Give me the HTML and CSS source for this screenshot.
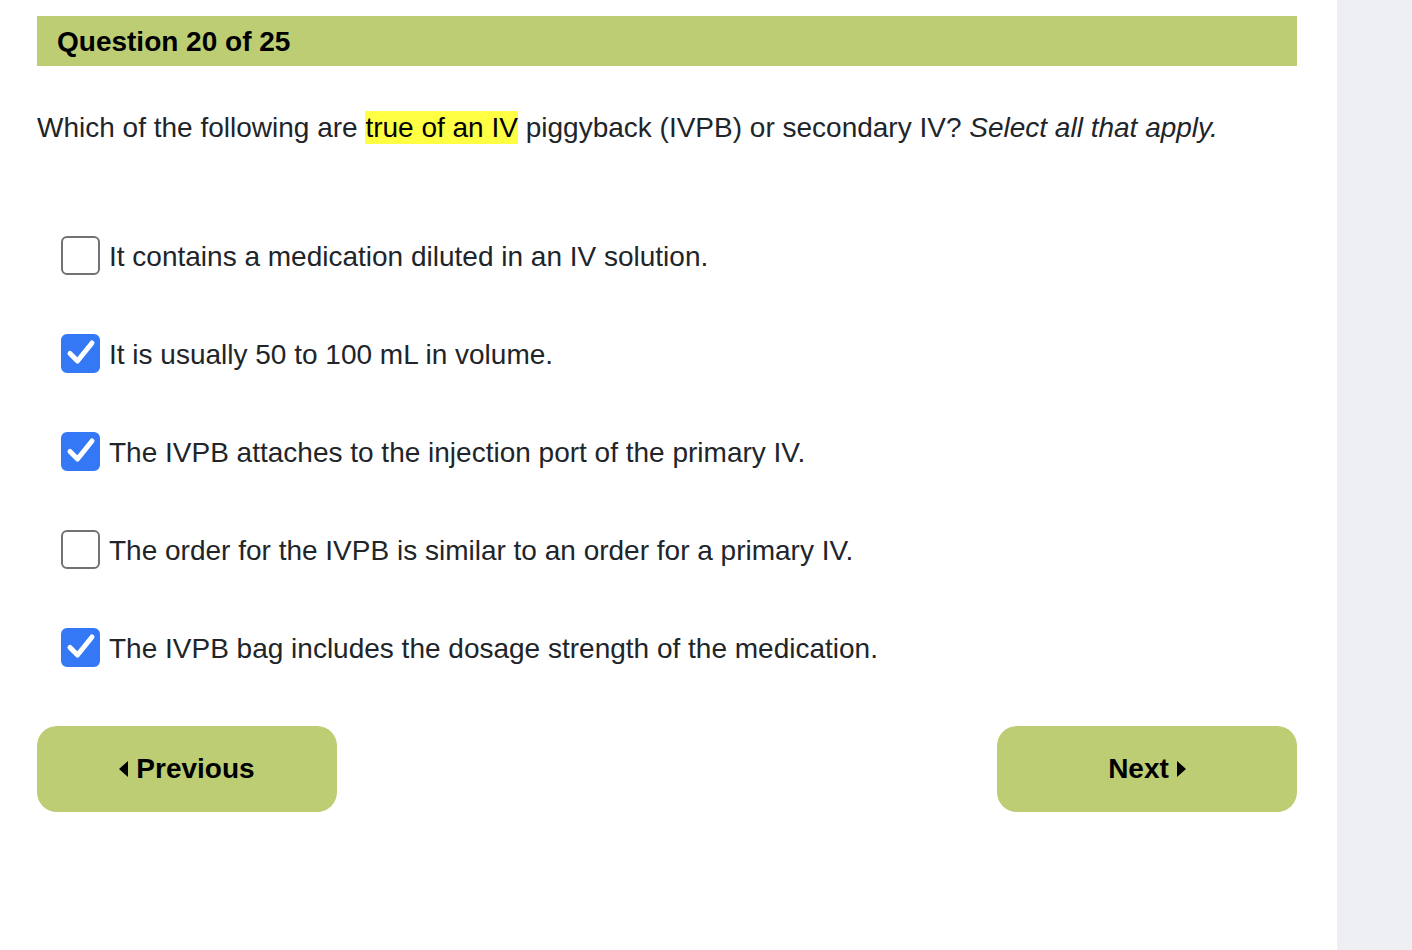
FILE: index.html
```html
<!DOCTYPE html>
<html lang="en">
<head>
    <meta charset="UTF-8">
    <title>Question 20 of 25</title>
    <link rel="stylesheet" href="styles.css">
</head>
<body>
    <div class="page">
        <div class="quiz">
            <div class="quiz-header">Question 20 of 25</div>

            <p class="question">Which of the following are <span class="hl">true of an IV</span> piggyback (IVPB) or secondary IV? <em>Select all that apply.</em></p>

            <div class="options">
                <label class="option">
                    <span class="box"></span>
                    <span class="option-text">It contains a medication diluted in an IV solution.</span>
                </label>
                <label class="option checked">
                    <span class="box"><svg viewBox="0 0 40 40" width="40" height="40"><path d="M9 20.5 L16.5 28 L31 10" fill="none" stroke="#fff" stroke-width="5" stroke-linecap="round" stroke-linejoin="round"/></svg></span>
                    <span class="option-text">It is usually 50 to 100 mL in volume.</span>
                </label>
                <label class="option checked">
                    <span class="box"><svg viewBox="0 0 40 40" width="40" height="40"><path d="M9 20.5 L16.5 28 L31 10" fill="none" stroke="#fff" stroke-width="5" stroke-linecap="round" stroke-linejoin="round"/></svg></span>
                    <span class="option-text">The IVPB attaches to the injection port of the primary IV.</span>
                </label>
                <label class="option">
                    <span class="box"></span>
                    <span class="option-text">The order for the IVPB is similar to an order for a primary IV.</span>
                </label>
                <label class="option checked">
                    <span class="box"><svg viewBox="0 0 40 40" width="40" height="40"><path d="M9 20.5 L16.5 28 L31 10" fill="none" stroke="#fff" stroke-width="5" stroke-linecap="round" stroke-linejoin="round"/></svg></span>
                    <span class="option-text">The IVPB bag includes the dosage strength of the medication.</span>
                </label>
            </div>

            <div class="nav">
                <button class="nav-btn"><span class="caret-left"></span>Previous</button>
                <button class="nav-btn">Next<span class="caret-right"></span></button>
            </div>
        </div>
        <div class="sidebar"></div>
    </div>
</body>
</html>
```

FILE: styles.css
```css
body {
    margin: 0;
    padding: 0;
    font-family: "Liberation Sans", Arial, sans-serif;
    color: #212529;
    background-color: #fff;
}
.page {
    display: flex;
    min-height: 950px;
}
.quiz {
    width: 1260px;
    padding: 16px 40px 0 37px;
    background-color: #fff;
}
.sidebar {
    flex: 1;
    background-color: #eeeff3;
}
.quiz-header {
    background-color: #bccd74;
    color: #000;
    font-size: 28px;
    font-weight: bold;
    height: 50px;
    line-height: 52px;
    padding-left: 20px;
}
.question {
    margin: 46px 0 0;
    font-size: 28px;
    line-height: 32px;
}
.hl {
    background-color: #ffff44;
    color: #000;
    padding: 1px 0;
}
.options {
    margin-top: 91px;
    padding-left: 24px;
}
.option {
    display: flex;
    align-items: center;
    gap: 9px;
    height: 40px;
    margin-bottom: 58px;
    font-size: 28px;
}
.option:last-child {
    margin-bottom: 0;
}
.option-text {
    padding-top: 3px;
}
.box {
    width: 35px;
    height: 35px;
    border: 2.5px solid #727272;
    border-radius: 6px;
    flex-shrink: 0;
}
.option.checked .box {
    background-color: #3478f6;
    border-color: #3478f6;
    position: relative;
}
.box svg {
    position: absolute;
    left: -2.5px;
    top: -2.5px;
}
.nav {
    display: flex;
    justify-content: space-between;
    margin-top: 59px;
}
.nav-btn {
    width: 300px;
    height: 86px;
    border: none;
    border-radius: 20px;
    background-color: #bccd74;
    color: #000;
    font-family: "Liberation Sans", Arial, sans-serif;
    font-size: 28px;
    font-weight: bold;
    display: flex;
    align-items: center;
    justify-content: center;
    gap: 8px;
    cursor: pointer;
}
.caret-left, .caret-right {
    width: 0;
    height: 0;
    border-top: 8px solid transparent;
    border-bottom: 8px solid transparent;
}
.caret-left {
    border-right: 9px solid #000;
}
.caret-right {
    border-left: 9px solid #000;
}
```
